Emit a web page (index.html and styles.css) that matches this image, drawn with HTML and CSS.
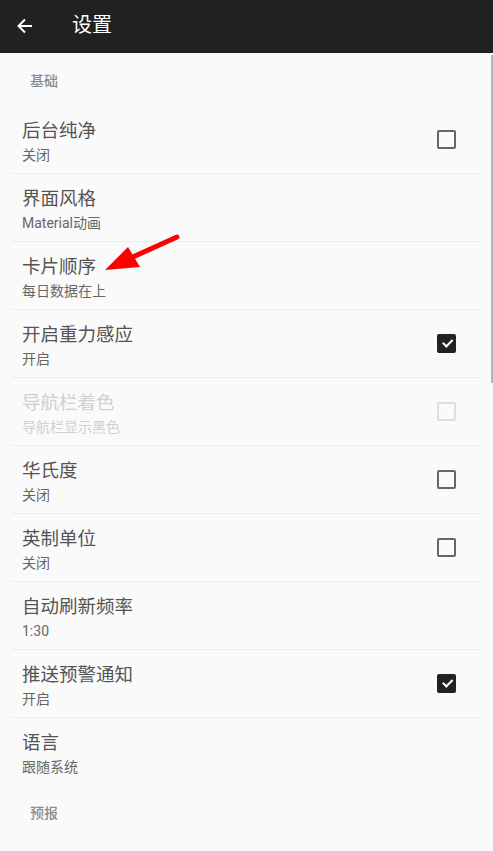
FILE: index.html
```html
<!DOCTYPE html>
<html lang="zh">
<head>
    <meta charset="UTF-8">
    <meta name="viewport" content="width=device-width, initial-scale=1.0">
    <title>设置</title>
    <link rel="stylesheet" href="styles.css">
</head>
<body>
    <header class="toolbar">
        <svg class="back" width="18" height="18" viewBox="0 0 18 18">
            <path d="M16 9H2.5M9 2.5L2.5 9L9 15.5" fill="none" stroke="#fff" stroke-width="2"/>
        </svg>
        <h1>设置</h1>
    </header>

    <main class="prefs">
        <div class="category">基础</div>
        <div class="list">
            <div class="item">
                <div class="text">
                    <div class="title">后台纯净</div>
                    <div class="summary">关闭</div>
                </div>
                <span class="check"></span>
            </div>
            <div class="item">
                <div class="text">
                    <div class="title">界面风格</div>
                    <div class="summary">Material动画</div>
                </div>
            </div>
            <div class="item">
                <div class="text">
                    <div class="title">卡片顺序</div>
                    <div class="summary">每日数据在上</div>
                </div>
            </div>
            <div class="item">
                <div class="text">
                    <div class="title">开启重力感应</div>
                    <div class="summary">开启</div>
                </div>
                <span class="check on"></span>
            </div>
            <div class="item disabled">
                <div class="text">
                    <div class="title">导航栏着色</div>
                    <div class="summary">导航栏显示黑色</div>
                </div>
                <span class="check"></span>
            </div>
            <div class="item">
                <div class="text">
                    <div class="title">华氏度</div>
                    <div class="summary">关闭</div>
                </div>
                <span class="check"></span>
            </div>
            <div class="item">
                <div class="text">
                    <div class="title">英制单位</div>
                    <div class="summary">关闭</div>
                </div>
                <span class="check"></span>
            </div>
            <div class="item">
                <div class="text">
                    <div class="title">自动刷新频率</div>
                    <div class="summary">1:30</div>
                </div>
            </div>
            <div class="item">
                <div class="text">
                    <div class="title">推送预警通知</div>
                    <div class="summary">开启</div>
                </div>
                <span class="check on"></span>
            </div>
            <div class="item">
                <div class="text">
                    <div class="title">语言</div>
                    <div class="summary">跟随系统</div>
                </div>
            </div>
        </div>
        <div class="category">预报</div>

        <!-- annotation arrow drawn over the list -->
        <svg class="pointer" width="493" height="851" viewBox="0 0 493 851">
            <line x1="177" y1="237" x2="124" y2="261" stroke="#f00" stroke-width="5" stroke-linecap="round"/>
            <polygon points="105,270 128,247 140,267" fill="#f00"/>
        </svg>
        <div class="scrollbar"></div>
    </main>
</body>
</html>
```

FILE: styles.css
```css
body {
    margin: 0;
    padding: 0;
    height: 851px;
    overflow: hidden;
    background-color: #fafafa;
    font-family: Roboto, "Noto Sans CJK SC", sans-serif;
}
.toolbar {
    height: 53px;
    background-color: #212121;
    display: flex;
    align-items: center;
    padding-left: 16px;
}
.toolbar .back {
    margin-top: -1px;
}
.toolbar h1 {
    margin: 0 0 0 38px;
    color: #fff;
    font-size: 20px;
    font-weight: normal;
    line-height: 24px;
    margin-top: -3px;
}
.category {
    height: 53px;
    display: flex;
    align-items: center;
    padding-left: 30px;
    font-size: 14px;
    color: #8c8c8c;
    font-weight: 500;
}
.list {
    margin: 0 13px 0 12px;
}
.item {
    display: flex;
    align-items: center;
    padding: 13px 24px 9px 10px;
    border-bottom: 1px solid #ececec;
}
.item:last-child {
    border-bottom: none;
}
.text {
    flex: 1;
}
.title {
    font-size: 18.5px;
    line-height: 24px;
    color: #545454;
}
.summary {
    margin-top: 3px;
    font-size: 14px;
    line-height: 18px;
    color: #666;
}
.disabled .title,
.disabled .summary {
    color: #d0d0d0;
}
.check {
    width: 15px;
    height: 15px;
    border: 2px solid #666;
    border-radius: 2px;
    margin-top: -4px;
    position: relative;
}
.check.on {
    background-color: #222;
    border-color: #222;
}
.check.on::after {
    content: "";
    position: absolute;
    left: 3px;
    top: 1px;
    width: 8px;
    height: 4px;
    border-left: 2px solid #fff;
    border-bottom: 2px solid #fff;
    transform: rotate(-45deg) translate(-1px, 2px);
}
.disabled .check {
    border-color: #dedede;
}
.prefs {
    position: relative;
}
.pointer {
    position: absolute;
    left: 0;
    top: -53px;
    pointer-events: none;
}
.scrollbar {
    position: absolute;
    right: 0;
    top: 2px;
    width: 2px;
    height: 328px;
    background-color: #b5b5b5;
}
```
